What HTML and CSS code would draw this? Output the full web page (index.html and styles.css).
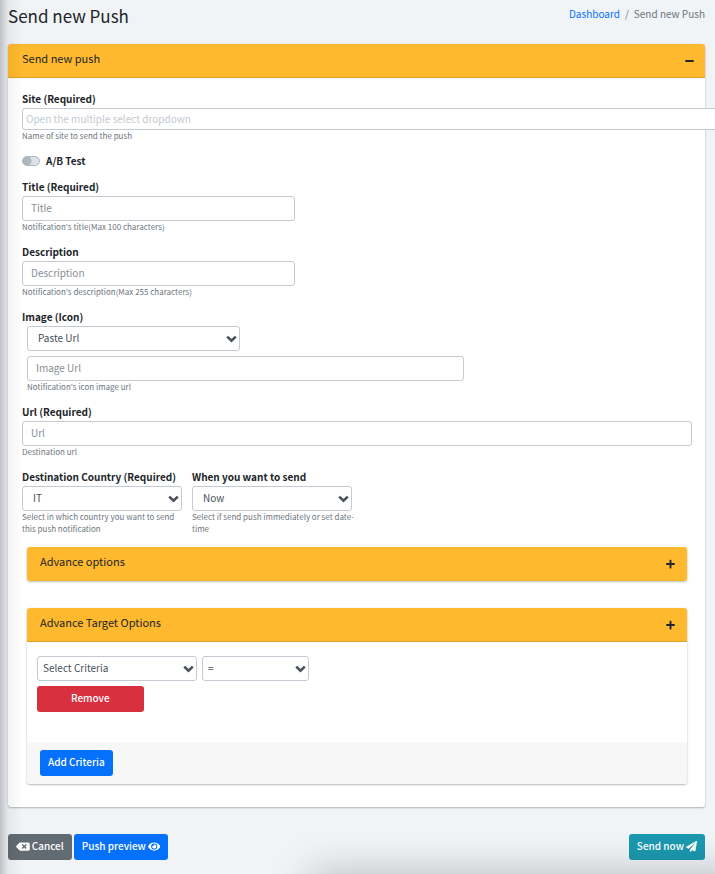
FILE: index.html
```html
<!DOCTYPE html>
<html lang="en">
<head>
<meta charset="utf-8">
<meta name="viewport" content="width=device-width, initial-scale=1">
<title>Send new Push</title>
<link rel="stylesheet" href="styles.css">
</head>
<body>
<svg class="symbols">
  <symbol id="chevron" viewBox="0 0 11 8"><path d="M1.200 1.600 5.500 5.700 9.800 1.600" fill="none" stroke="#495057" stroke-width="2.600"/></symbol>
  <symbol id="plus" viewBox="0 0 448 512"><path d="M416 208H272V64c0-17.700-14.300-32-32-32h-32c-17.700 0-32 14.300-32 32v144H32c-17.700 0-32 14.300-32 32v32c0 17.700 14.300 32 32 32h144v144c0 17.700 14.300 32 32 32h32c17.700 0 32-14.300 32-32V304h144c17.700 0 32-14.300 32-32v-32c0-17.700-14.300-32-32-32z"/></symbol>
</svg>
<header class="page-header">
  <h1>Send new Push</h1>
  <nav class="breadcrumb" aria-label="Breadcrumb"><a href="#">Dashboard</a><span>/</span><span>Send new Push</span></nav>
</header>
<form class="page-form">
  <section class="card">
    <div class="card-header">
      <h2>Send new push</h2>
      <button type="button" class="tool" aria-label="Collapse"><svg viewBox="0 0 448 512"><path d="M416 208H32c-17.700 0-32 14.300-32 32v32c0 17.700 14.300 32 32 32h384c17.700 0 32-14.300 32-32v-32c0-17.700-14.300-32-32-32z"/></svg></button>
    </div>
    <div class="card-body">
      <div class="group">
        <label for="site">Site (Required)</label>
        <input id="site" class="control site" type="text" placeholder="Open the multiple select dropdown">
        <small>Name of site to send the push</small>
      </div>
      <div class="group switch-row">
        <input id="ab" class="switch" type="checkbox">
        <label for="ab">A/B Test</label>
      </div>
      <div class="group grid">
        <div class="span-5">
          <label for="title">Title (Required)</label>
          <input id="title" class="control" type="text" placeholder="Title">
          <small>Notification's title(Max 100 characters)</small>
        </div>
      </div>
      <div class="group grid">
        <div class="span-5">
          <label for="description">Description</label>
          <input id="description" class="control" type="text" placeholder="Description">
          <small>Notification's description(Max 255 characters)</small>
        </div>
      </div>
      <div class="group">
        <label for="image-source">Image (Icon)</label>
        <div class="grid image-fields">
          <div class="select span-4"><select id="image-source" class="control"><option>Paste Url</option></select><svg><use href="#chevron"/></svg></div>
          <div class="span-8">
            <input class="control" type="text" placeholder="Image Url" aria-label="Image Url">
            <small>Notification's icon image url</small>
          </div>
        </div>
      </div>
      <div class="group">
        <label for="url">Url (Required)</label>
        <input id="url" class="control" type="text" placeholder="Url">
        <small>Destination url</small>
      </div>
      <div class="group grid">
        <div class="span-3">
          <label for="country">Destination Country (Required)</label>
          <div class="select"><select id="country" class="control"><option>IT</option></select><svg><use href="#chevron"/></svg></div>
          <small>Select in which country you want to send this push notification</small>
        </div>
        <div class="span-3">
          <label for="when">When you want to send</label>
          <div class="select"><select id="when" class="control"><option>Now</option></select><svg><use href="#chevron"/></svg></div>
          <small class="fixed-lines">Select if send push immediately or set date-<br>time</small>
        </div>
      </div>
      <div class="panels">
        <section class="card">
          <div class="card-header collapsed">
            <h2>Advance options</h2>
            <button type="button" class="tool" aria-label="Expand"><svg><use href="#plus"/></svg></button>
          </div>
        </section>
        <section class="card">
          <div class="card-header">
            <h2>Advance Target Options</h2>
            <button type="button" class="tool" aria-label="Expand"><svg><use href="#plus"/></svg></button>
          </div>
          <div class="criteria">
            <div class="criteria-row">
              <div class="select criterion"><select class="control" aria-label="Criteria"><option>Select Criteria</option></select><svg><use href="#chevron"/></svg></div>
              <div class="select operator"><select class="control" aria-label="Operator"><option>=</option></select><svg><use href="#chevron"/></svg></div>
            </div>
            <div class="criteria-row">
              <button type="button" class="btn danger operator">Remove</button>
            </div>
          </div>
          <div class="card-footer"><button type="button" class="btn primary">Add Criteria</button></div>
        </section>
      </div>
    </div>
  </section>
  <div class="actions">
    <button type="button" class="btn secondary"><svg viewBox="0 0 640 512"><path d="M576 64H205.300c-17 0-33.300 6.700-45.300 18.700L9.400 233.400c-12.500 12.500-12.500 32.800 0 45.300L160 429.300c12 12 28.300 18.700 45.300 18.700H576c35.300 0 64-28.700 64-64V128c0-35.300-28.700-64-64-64zm-84.700 254.100c6.200 6.200 6.200 16.400 0 22.600l-22.600 22.600c-6.200 6.200-16.400 6.200-22.600 0L384 301.300l-62.100 62.100c-6.200 6.200-16.400 6.200-22.600 0l-22.600-22.600c-6.200-6.200-6.200-16.400 0-22.600l62.100-62.200-62.100-62.100c-6.200-6.200-6.200-16.400 0-22.600l22.600-22.600c6.200-6.200 16.400-6.200 22.600 0l62.100 62.100 62.100-62.100c6.200-6.200 16.400-6.200 22.600 0l22.600 22.600c6.200 6.200 6.200 16.400 0 22.600L429.300 256z"/></svg>Cancel</button>
    <button type="button" class="btn primary">Push preview<svg viewBox="0 0 576 512"><path d="M572.500 241.400C518.300 135.600 410.900 64 288 64S57.700 135.600 3.500 241.400a32.400 32.400 0 0 0 0 29.200C57.700 376.400 165.100 448 288 448s230.300-71.600 284.500-177.400a32.400 32.400 0 0 0 0-29.200zM288 400a144 144 0 1 1 144-144 143.900 143.900 0 0 1-144 144zm0-240a95.300 95.300 0 0 0-25.300 3.800 47.900 47.900 0 0 1-66.900 66.900A95.800 95.800 0 1 0 288 160z"/></svg></button>
    <button type="submit" class="btn info">Send now<svg viewBox="0 0 512 512"><path d="M476 3.200 12.500 270.600c-18.100 10.400-15.800 35.600 2.200 43.200L121 358.400l287.300-253.200c5.500-4.900 13.300 2.600 8.600 8.300L176 407v80.500c0 23.600 28.500 32.900 42.500 15.800L282 426l124.600 52.200c14.200 6 30.400-2.900 33-18.200l72-432C515 7.800 493.300-6.800 476 3.200z"/></svg></button>
  </div>
</form>
<div class="edge-shadow left"></div>
<div class="edge-shadow bottom"></div>
</body>
</html>
```
FILE: styles.css
```css
* { box-sizing: border-box; }
body {
  margin: 0;
  padding: 0 10px 14px 8px;
  overflow-x: hidden;
  background: #f1f4f7;
  color: #212529;
  font-family: "Noto Sans CJK JP", "Noto Sans", sans-serif;
  font-size: 10px;
  line-height: 16px;
}
h1, h2 { margin: 0; font-weight: 400; }
h1 { font-size: 17px; line-height: 32px; }
h2 { font-size: 11px; line-height: 16px; }
button, input, select { font: inherit; }
a { color: #0571fb; text-decoration: none; }
.symbols { display: none; }

.page-header { display: flex; justify-content: space-between; align-items: flex-start; height: 44px; }
.breadcrumb { display: flex; gap: 5px; padding-top: 6px; color: #6c757d; }

.card { border-radius: 3px; background: #fff; box-shadow: 0 0 1px rgba(0,0,0,.2), 0 1px 2px rgba(0,0,0,.25); }
.card-header {
  display: flex;
  justify-content: space-between;
  align-items: center;
  height: 34px;
  padding: 0 11px 6px 14px;
  border-bottom: 1px solid #e0a127;
  border-radius: 3px 3px 0 0;
  background: #ffb92e;
}
.card-header.collapsed { border-bottom: 0; border-radius: 3px; }
.tool { display: flex; padding: 6px 0 0; border: 0; background: none; color: #212529; }
.tool svg { width: 9px; height: 10px; fill: currentColor; }
.card-body { padding: 13px 13px 23px 14px; }

.group { margin-bottom: 11px; }
label { display: block; height: 17px; font-weight: 700; }
small { display: block; color: #6c757d; font-size: 8px; line-height: 12px; }
.fixed-lines { white-space: nowrap; }
.grid { display: grid; grid-template-columns: repeat(12, minmax(0, 1fr)); column-gap: 10px; }
.span-3 { grid-column: span 3; }
.span-4 { grid-column: 1 / span 4; }
.span-5 { grid-column: span 5; }
.span-8 { grid-column: 1 / span 8; }
.image-fields { row-gap: 5px; padding: 0 5px; }

.control {
  display: block;
  width: 100%;
  height: 25px;
  padding: 0 8px 2px;
  border: 1px solid #c3cad1;
  border-radius: 3px;
  background: #fff;
  color: #495057;
}
.control::placeholder { color: #868e96; opacity: 1; }
.control.site { width: calc(100% + 40px); height: 22px; padding: 0 3px 2px; }
.control.site::placeholder { color: #c3cad1; }
.select { display: grid; align-items: center; }
.select > * { grid-area: 1 / 1; }
.select svg { justify-self: end; width: 11px; height: 8px; margin-right: 3px; pointer-events: none; }
select.control { padding: 0 10px 2px; appearance: none; }

.switch-row { display: flex; align-items: center; gap: 6px; height: 15px; }
.switch-row label { height: 16px; }
.switch { width: 18px; height: 10px; margin: 0; border: 1px solid #adb5bd; border-radius: 5px; appearance: none; background: radial-gradient(circle at 4px 4px, #adb5bd 4px, #dee2e6 5px); }

.panels { display: grid; gap: 27px; padding: 1px 5px 0; }
.panels .card-header { padding-left: 13px; padding-right: 12px; }
.criteria { display: grid; gap: 5px; padding: 14px 10px 30px; }
.criteria-row { display: flex; gap: 5px; }
.criteria select.control { padding: 0 5px 2px; }
.criterion { width: 25%; }
.operator { width: 16.667%; }
.card-footer { padding: 8px 13px; border-radius: 0 0 3px 3px; background: #f7f7f7; }

.btn { display: inline-flex; align-items: center; justify-content: center; gap: 2px; height: 26px; padding: 0 8px 2px; border: 0; border-radius: 3px; color: #fff; font-weight: 500; white-space: nowrap; }
.btn svg { height: 11px; fill: currentColor; }
.card-footer .btn { display: flex; }
.primary { background: #0571fb; }
.secondary { background: #636b72; }
.danger { background: #d9303f; }
.info { margin-left: auto; background: #1b99b0; }
.actions { display: flex; gap: 2px; padding-top: 27px; }

.edge-shadow { position: fixed; pointer-events: none; }
.edge-shadow.left { inset: 0 auto 0 0; width: 22px; background: linear-gradient(90deg, rgba(0,0,0,.2), rgba(0,0,0,.05) 35%, transparent); }
.edge-shadow.bottom { top: 100%; right: -40px; left: 310px; height: 40px; box-shadow: 0 0 40px rgba(0,0,0,.25); }
```
